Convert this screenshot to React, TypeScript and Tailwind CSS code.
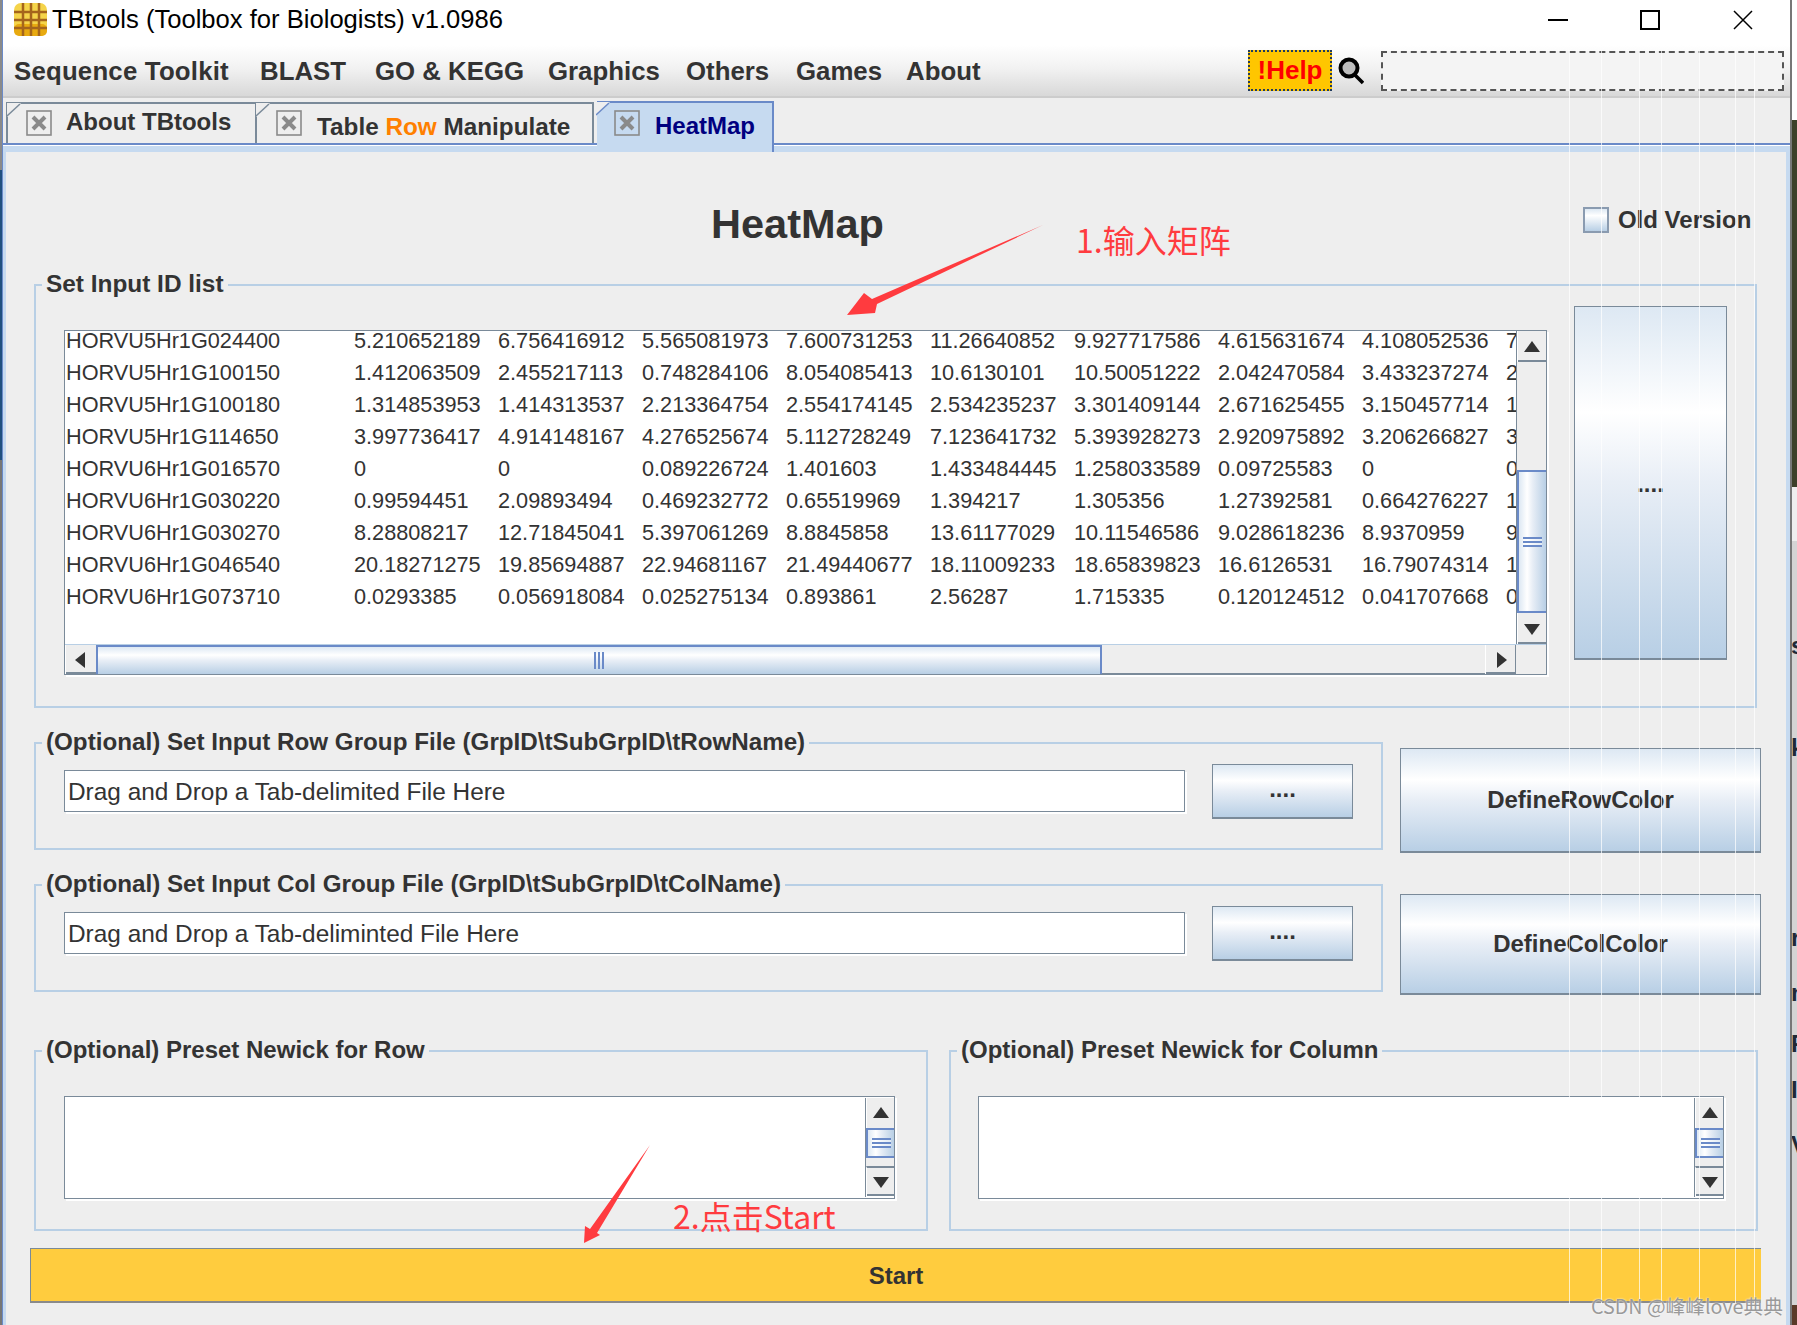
import React from 'react';
import clsx from 'clsx';

const rows = [
  ['HORVU5Hr1G024400', '5.210652189', '6.756416912', '5.565081973', '7.600731253', '11.26640852', '9.927717586', '4.615631674', '4.108052536', '7'],
  ['HORVU5Hr1G100150', '1.412063509', '2.455217113', '0.748284106', '8.054085413', '10.6130101', '10.50051222', '2.042470584', '3.433237274', '2'],
  ['HORVU5Hr1G100180', '1.314853953', '1.414313537', '2.213364754', '2.554174145', '2.534235237', '3.301409144', '2.671625455', '3.150457714', '1'],
  ['HORVU5Hr1G114650', '3.997736417', '4.914148167', '4.276525674', '5.112728249', '7.123641732', '5.393928273', '2.920975892', '3.206266827', '3'],
  ['HORVU6Hr1G016570', '0', '0', '0.089226724', '1.401603', '1.433484445', '1.258033589', '0.09725583', '0', '0'],
  ['HORVU6Hr1G030220', '0.99594451', '2.09893494', '0.469232772', '0.65519969', '1.394217', '1.305356', '1.27392581', '0.664276227', '1'],
  ['HORVU6Hr1G030270', '8.28808217', '12.71845041', '5.397061269', '8.8845858', '13.61177029', '10.11546586', '9.028618236', '8.9370959', '9'],
  ['HORVU6Hr1G046540', '20.18271275', '19.85694887', '22.94681167', '21.49440677', '18.11009233', '18.65839823', '16.6126531', '16.79074314', '1'],
  ['HORVU6Hr1G073710', '0.0293385', '0.056918084', '0.025275134', '0.893861', '2.56287', '1.715335', '0.120124512', '0.041707668', '0'],
];

const metal = 'bg-[linear-gradient(180deg,#dde8f3_0%,#ffffff_30%,#e8eef6_50%,#b8cfe5_100%)] border border-b-2 border-[#7a8a99] flex items-center justify-center font-bold text-[24px] text-[#333]';

const Logo = () => (
  <svg width="33" height="33" viewBox="0 0 33 33">
    <rect width="33" height="33" rx="7" fill="#f5d44a" />
    <rect y="21" width="33" height="12" rx="5" fill="#e8aa10" />
    <path d="M9 0V33M17 0V33M25 0V33M0 9H33M0 17H33M0 25H33" stroke="#a5651c" strokeWidth="2.5" />
  </svg>
);

const CloseBox = () => (
  <svg width="26" height="26" viewBox="0 0 26 26" className="shrink-0">
    <rect x="1" y="1" width="24" height="24" fill="none" stroke="#8a8a8a" strokeWidth="1.6" />
    <path d="M7 7L19 19M19 7L7 19" stroke="#8a8a8a" strokeWidth="4" />
  </svg>
);

const Corner = ({ color }: { color: string }) => (
  <svg width="14" height="14" viewBox="0 0 14 14" className="absolute -left-[1px] -top-[1px]">
    <polygon points="0,0 14,0 0,14" fill="#eeeeee" />
    <path d="M0 13L13 1" stroke={color} strokeWidth="1.5" fill="none" />
  </svg>
);

const Arrow = ({ dir }: { dir: 'up' | 'down' | 'left' | 'right' }) => {
  const pts = {
    up: '0,13 8,2 16,13',
    down: '0,3 16,3 8,14',
    left: '12,0 12,16 2,8',
    right: '4,0 4,16 14,8',
  }[dir];
  return (
    <svg width="16" height="16" viewBox="0 0 16 16">
      <polygon points={pts} fill="#333" />
    </svg>
  );
};

const ScrollBtn = ({ dir, className }: { dir: 'up' | 'down' | 'left' | 'right'; className?: string }) => (
  <div className={clsx('flex shrink-0 items-center justify-center bg-[#eeeeee] border-l border-white shadow-[inset_0_-2px_0_#7a8a99]', className)}>
    <Arrow dir={dir} />
  </div>
);

const VGrip = () => (
  <div className="flex w-[19px] flex-col gap-[2px] bg-white/50">
    <div className="h-[2px] bg-[#6a8ac8]" />
    <div className="h-[2px] bg-[#6a8ac8]" />
    <div className="h-[2px] bg-[#6a8ac8]" />
  </div>
);

const thumbV = 'flex shrink-0 items-center justify-center border-y-2 border-l-2 border-[#6a8ac8] bg-[linear-gradient(90deg,#dde8f3_0%,#ffffff_30%,#e8eef6_50%,#b8cfe5_100%)]';

const Group = ({ title, className, titleClass, children }: { title: string; className?: string; titleClass?: string; children?: React.ReactNode }) => (
  <div className={clsx('relative border-2 border-[#b8cfe5]', className)}>
    <span className={clsx('absolute -top-[16px] left-[6px] whitespace-pre bg-[#eeeeee] px-[4px] font-bold leading-[28px] text-[#333]', titleClass ?? 'text-[24px]')}>{title}</span>
    {children}
  </div>
);

const FileRow = ({ title, placeholder, button, buttonClass }: { title: string; placeholder: string; button: string; buttonClass: string }) => (
  <div className="flex items-start">
    <Group title={title} titleClass="text-[24.2px]" className="flex h-[108px] w-[1349px] shrink-0 items-start pl-[28px]">
      <div className="mt-[26px] flex h-[42px] w-[1121px] items-center border border-[#7a8a99] bg-white pl-[3px] pt-[3px] text-[24.4px] text-[#333] shadow-[2px_2px_0_#fff]">{placeholder}</div>
      <div className={clsx(metal, 'ml-[27px] mt-[20px] h-[55px] w-[141px] pb-[4px]')}>....</div>
    </Group>
    <div className={clsx(metal, 'ml-[17px] w-[361px]', buttonClass)}>{button}</div>
  </div>
);

const Newick = ({ title, className, boxClass }: { title: string; className: string; boxClass: string }) => (
  <Group title={title} className={clsx('h-[181px] shrink-0 pl-[28px] pt-[44px]', className)}>
    <div className={clsx('flex h-[103px] justify-end border border-[#7a8a99] bg-white py-[1px] shadow-[2px_2px_0_#fff]', boxClass)}>
      <div className="flex w-[29px] flex-col border-l border-[#7a8a99]">
        <ScrollBtn dir="up" className="h-[30px] shadow-none" />
        <div className={clsx(thumbV, 'h-[30px]')}>
          <VGrip />
        </div>
        <div className="h-[8px] shrink-0 bg-[#eeeeee]" />
        <ScrollBtn dir="down" className="h-[30px] border-t-2 border-t-[#7a8a99]" />
      </div>
    </div>
  </Group>
);

const menu = [
  { label: 'Sequence Toolkit', cls: 'w-[246px] tracking-[0.2px]' },
  { label: 'BLAST', cls: 'w-[115px]' },
  { label: 'GO & KEGG', cls: 'w-[173px]' },
  { label: 'Graphics', cls: 'w-[138px]' },
  { label: 'Others', cls: 'w-[110px]' },
  { label: 'Games', cls: 'w-[110px]' },
  { label: 'About', cls: 'w-[342px]' },
];

const streaks = [1569, 1601, 1639, 1661, 1699, 1735, 1754];

const behind = [
  { char: 's', cls: 'top-[632px]' },
  { char: 'k', cls: 'top-[734px]' },
  { char: 'r', cls: 'top-[924px]' },
  { char: 'n', cls: 'top-[979px]' },
  { char: 'P', cls: 'top-[1030px]' },
  { char: 'I', cls: 'top-[1076px]' },
  { char: 'V', cls: 'top-[1131px]' },
];

export default function App() {
  return (
    <div className="relative flex h-[1325px] w-[1797px] overflow-hidden bg-[#eeeeee] font-['Liberation_Sans',Arial,sans-serif]">
      {/* desktop showing behind the window, left side */}
      <div className="flex w-[3px] shrink-0 flex-col border-r border-[#6a8ac8]">
        <div className="h-[170px] bg-[#8a8a8a]" />
        <div className="h-[290px] bg-[#205080]" />
        <div className="flex-1 bg-[#777]" />
      </div>

      <div className="flex w-[1787px] shrink-0 flex-col">
        {/* title bar */}
        <div className="flex h-[45px] shrink-0 items-center bg-white pb-[6px] pl-[11px]">
          <Logo />
          <span className="ml-[5px] whitespace-pre text-[25.6px] text-black">TBtools (Toolbox for Biologists) v1.0986</span>
          <div className="ml-auto flex items-center pr-[37px]">
            <div className="h-[2px] w-[20px] bg-black" />
            <div className="ml-[72px] h-[20px] w-[20px] border-2 border-black" />
            <svg width="20" height="20" viewBox="0 0 20 20" className="ml-[73px]">
              <path d="M1 1L19 19M19 1L1 19" stroke="#000" strokeWidth="1.5" />
            </svg>
          </div>
        </div>

        {/* menu bar */}
        <div className="flex h-[51px] shrink-0 items-center bg-[linear-gradient(180deg,#ffffff_0%,#f2f2f2_45%,#d8d8d8_100%)] pl-[11px] text-[25.8px] font-bold text-[#333]">
          {menu.map((m) => (
            <span key={m.label} className={clsx('whitespace-pre pt-[2px]', m.cls)}>{m.label}</span>
          ))}
          <div className="flex h-[41px] w-[84px] items-center justify-center border-2 border-dotted border-[#1e3a5f] bg-[#ffc600] text-[26px] text-[#ff0000]">!Help</div>
          <svg width="26" height="28" viewBox="0 0 26 28" className="ml-[6px]">
            <circle cx="11" cy="11" r="8.5" fill="#bdbdbd" stroke="#000" strokeWidth="4" />
            <path d="M16 17L25 26" stroke="#000" strokeWidth="3.5" />
          </svg>
          <div className="ml-[17px] h-[40px] w-[403px] border-2 border-dashed border-[#555] bg-[#f4f4f4]" />
        </div>
        <div className="h-[2px] shrink-0 bg-[#cccccc]" />

        {/* tabs */}
        <div className="flex h-[47px] shrink-0 items-end border-b-2 border-[#6a8ac8] pl-[3px]">
          <div className="relative flex h-[41px] w-[251px] items-start border-l-2 border-r-2 border-t-2 border-[#7a8a99] pl-[18px] pt-[6px]">
            <Corner color="#7a8a99" />
            <CloseBox />
            <span className="ml-[14px] -mt-[1px] text-[24px] font-bold leading-[26px] text-[#333]">About TBtools</span>
          </div>
          <div className="relative flex h-[41px] w-[337px] items-start border-r-2 border-t-2 border-[#7a8a99] pl-[19px] pt-[6px]">
            <Corner color="#7a8a99" />
            <CloseBox />
            <span className="ml-[15px] mt-[4px] whitespace-pre text-[24.3px] font-bold leading-[26px] text-[#333]">
              Table <span className="text-[#ff8000]">Row</span> Manipulate
            </span>
          </div>
          <div className="relative z-10 -mb-[9px] ml-[3px] flex h-[51px] w-[177px] items-start border-r-2 border-t-2 border-[#6a8ac8] bg-[#c6daf0] pl-[17px] pt-[7px]">
            <Corner color="#6a8ac8" />
            <CloseBox />
            <span className="ml-[15px] mt-[3px] text-[24px] font-bold leading-[26px] text-[#000080]">HeatMap</span>
          </div>
        </div>
        <div className="h-px shrink-0 bg-white" />
        <div className="h-[6px] shrink-0 bg-[#c6daf0]" />

        {/* panel */}
        <div className="flex flex-1 flex-col border-l-[3px] border-r-[4px] border-[#c6daf0] pl-[28px]">
          <div className="flex h-[132px] shrink-0 items-start">
            <h1 className="ml-[677px] mt-[46px] text-[41.5px] font-bold leading-[52px] text-[#333]">HeatMap</h1>
            <div className="ml-[699px] mt-[50px] flex items-center">
              <div className="h-[26px] w-[26px] border-2 border-[#8a9bb0] bg-[linear-gradient(180deg,#dde8f3_0%,#ffffff_30%,#b8cfe5_100%)]" />
              <span className="ml-[9px] whitespace-pre text-[24px] font-bold text-[#333]">Old Version</span>
            </div>
          </div>

          <Group title="Set Input ID list" titleClass="text-[24.4px]" className="flex h-[424px] w-[1723px] shrink-0 items-start pl-[28px]">
            <div className="mt-[44px] flex h-[345px] w-[1483px] shrink-0 flex-col border border-[#7a8a99] bg-white shadow-[2px_2px_0_#fff]">
              <div className="flex h-[313px] shrink-0">
                <div className="min-w-0 flex-1 overflow-hidden pl-[1px]">
                  <div className="-mt-[6px] text-[21.7px] leading-[32px] text-[#333]">
                    {rows.map((row) => (
                      <div key={row[0]} className="flex h-[32px] whitespace-pre">
                        {row.map((cell, i) => (
                          <span key={i} className={i === 0 ? 'w-[288px] shrink-0' : 'w-[144px] shrink-0'}>{cell}</span>
                        ))}
                      </div>
                    ))}
                  </div>
                </div>
                <div className="flex w-[30px] shrink-0 flex-col border-l border-[#7a8a99]">
                  <ScrollBtn dir="up" className="h-[31px]" />
                  <div className="h-[108px] shrink-0 bg-[#eeeeee]" />
                  <div className={clsx(thumbV, 'h-[143px]')}>
                    <VGrip />
                  </div>
                  <ScrollBtn dir="down" className="h-[31px]" />
                </div>
              </div>
              <div className="flex flex-1 border-t border-[#b8cfe5]">
                <div className="flex w-[1450px] shrink-0 bg-[#eeeeee]">
                  <ScrollBtn dir="left" className="w-[31px]" />
                  <div className="flex w-[1006px] shrink-0 items-center justify-center border-l-2 border-r-2 border-t-2 border-[#6a8ac8] bg-[linear-gradient(180deg,#dde8f3_0%,#ffffff_30%,#e8eef6_50%,#b8cfe5_100%)]">
                    <div className="flex gap-[2px]">
                      <div className="h-[17px] w-[2px] bg-[#6a8ac8]" />
                      <div className="h-[17px] w-[2px] bg-[#6a8ac8]" />
                      <div className="h-[17px] w-[2px] bg-[#6a8ac8]" />
                    </div>
                  </div>
                  <div className="flex-1 border-b border-[#7a8a99]" />
                  <ScrollBtn dir="right" className="w-[30px]" />
                </div>
                <div className="flex-1 border-l border-[#7a8a99] bg-[#eeeeee]" />
              </div>
            </div>
            <div className={clsx(metal, 'ml-[27px] mt-[20px] h-[354px] w-[153px] pt-[3px]')}>....</div>
          </Group>

          <div className="mt-[34px]">
            <FileRow title="(Optional) Set Input Row Group File (GrpID\tSubGrpID\tRowName)" placeholder="Drag and Drop a Tab-delimited File Here" button="DefineRowColor" buttonClass="mt-[6px] h-[105px]" />
          </div>
          <div className="mt-[31px]">
            <FileRow title="(Optional) Set Input Col Group File (GrpID\tSubGrpID\tColName)" placeholder="Drag and Drop a Tab-deliminted File Here" button="DefineColColor" buttonClass="mt-[10px] h-[101px]" />
          </div>

          <div className="mt-[55px] flex gap-[21px]">
            <Newick title="(Optional) Preset Newick for Row" className="w-[894px]" boxClass="w-[831px]" />
            <Newick title="(Optional) Preset Newick for Column" className="w-[809px]" boxClass="-ml-[1px] w-[746px]" />
          </div>

          <div className="-ml-[4px] mt-[17px] flex h-[55px] w-[1731px] shrink-0 items-center justify-center border-t border-b-2 border-l border-t-[#7a8a99] border-b-[#8a8a8a] border-l-[#7a8a99] bg-[#ffcc3e] pt-[1px] text-[24px] font-bold text-[#333]">
            Start
          </div>
        </div>
      </div>

      {/* desktop showing behind the window, right side */}
      <div className="relative flex w-[7px] shrink-0 flex-col overflow-hidden border-l-2 border-[#777]">
        <div className="h-[120px] shrink-0 bg-white" />
        <div className="h-[367px] shrink-0 bg-[#3d4029]" />
        <div className="h-[54px] shrink-0 bg-[#eeeeee]" />
        <div className="flex-1 bg-[#d4d4d4]" />
        <div className="h-[20px] shrink-0 bg-[#5a3a28]" />
        {behind.map((b) => (
          <span key={b.char} className={clsx('absolute -left-[1px] text-[24px] font-bold leading-[28px] text-[#1f2937]', b.cls)}>{b.char}</span>
        ))}
      </div>

      {/* screen-capture streaks over the right hand side */}
      {streaks.map((x) => (
        <div key={x} className="pointer-events-none absolute top-[50px] h-[1254px] w-px bg-white/70" style={{ left: x }} />
      ))}

      {/* red annotations painted on the screenshot */}
      <svg width="1797" height="1325" className="pointer-events-none absolute left-0 top-0">
        <polygon points="1043,225 872,299 864,293 847,315 875,313 877,304" fill="#ff3b3f" />
        <polygon points="650,1145 597,1233 600,1235 584,1243 585,1226 590,1229" fill="#ff3b3f" />
      </svg>
      <span className="absolute left-[1076px] top-[217px] whitespace-pre font-['Noto_Sans_CJK_SC',sans-serif] text-[32px] leading-[44px] text-[#ff3b3f]">1.输入矩阵</span>
      <span className="absolute left-[673px] top-[1193px] whitespace-pre font-['Noto_Sans_CJK_SC',sans-serif] text-[32px] leading-[44px] text-[#ff3b3f]">2.点击Start</span>
      <span className="absolute left-[1591px] top-[1293px] whitespace-pre font-['Noto_Sans_CJK_SC',sans-serif] text-[19.7px] leading-[26px] text-[#9a9a9a] [text-shadow:0_0_2px_#fff]">CSDN @峰峰love典典</span>
    </div>
  );
}
